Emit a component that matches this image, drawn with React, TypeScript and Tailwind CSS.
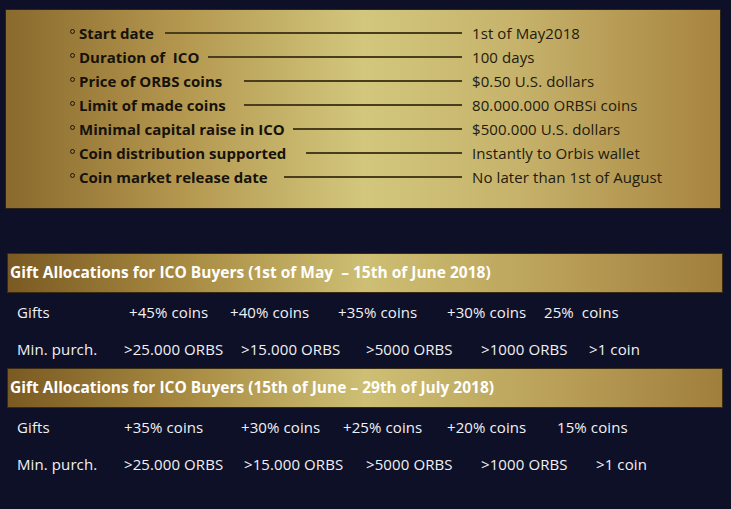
import React from "react";

const facts: { label: string; w: number; value: string }[] = [
  { label: "Start date", w: 95, value: "1st of May2018" },
  { label: "Duration of\u00a0 ICO", w: 138, value: "100 days" },
  { label: "Price of ORBS coins", w: 174, value: "$0.50 U.S. dollars" },
  { label: "Limit of made coins", w: 174, value: "80.000.000 ORBSi coins" },
  { label: "Minimal capital raise in ICO", w: 223, value: "$500.000 U.S. dollars" },
  { label: "Coin distribution supported", w: 236, value: "Instantly to Orbis wallet" },
  { label: "Coin market release date", w: 214, value: "No later than 1st of August" },
];

type Cell = { text: string; w: number };
type Row = { label: string; labelW: number; cells: Cell[] };

const periods: { title: string; rows: Row[] }[] = [
  {
    title: "Gift Allocations for ICO Buyers (1st of May\u00a0 \u2013 15th of June 2018)",
    rows: [
      {
        label: "Gifts",
        labelW: 112,
        cells: [
          { text: "+45% coins", w: 101 },
          { text: "+40% coins", w: 108 },
          { text: "+35% coins", w: 109 },
          { text: "+30% coins", w: 97 },
          { text: "25%\u00a0 coins", w: 120 },
        ],
      },
      {
        label: "Min. purch.",
        labelW: 107,
        cells: [
          { text: ">25.000 ORBS", w: 117 },
          { text: ">15.000 ORBS", w: 125 },
          { text: ">5000 ORBS", w: 115 },
          { text: ">1000 ORBS", w: 108 },
          { text: ">1 coin", w: 100 },
        ],
      },
    ],
  },
  {
    title: "Gift Allocations for ICO Buyers (15th of June \u2013 29th of July 2018)",
    rows: [
      {
        label: "Gifts",
        labelW: 107,
        cells: [
          { text: "+35% coins", w: 117 },
          { text: "+30% coins", w: 102 },
          { text: "+25% coins", w: 104 },
          { text: "+20% coins", w: 110 },
          { text: "15% coins", w: 100 },
        ],
      },
      {
        label: "Min. purch.",
        labelW: 107,
        cells: [
          { text: ">25.000 ORBS", w: 120 },
          { text: ">15.000 ORBS", w: 122 },
          { text: ">5000 ORBS", w: 115 },
          { text: ">1000 ORBS", w: 115 },
          { text: ">1 coin", w: 100 },
        ],
      },
    ],
  },
];

function GiftTable({ title, rows }: { title: string; rows: Row[] }) {
  return (
    <div>
      <div className="ml-[7px] mr-[8px] h-[40px] flex items-center pl-[2px] border border-[#3a2c12] bg-[linear-gradient(90deg,#7a5a22_0%,#a88b42_25%,#cdbf74_50%,#bba25b_75%,#a07e3c_100%)]">
        <span className="text-white font-bold text-[15.5px]">{title}</span>
      </div>
      {rows.map((r, idx) => (
        <div
          key={r.label}
          className={`flex items-center pl-[17px] text-[#f1f1f4] text-[15px] tracking-[0.1px] ${idx === 0 ? "h-[38px]" : "h-[37px]"}`}
        >
          <span className="shrink-0" style={{ width: r.labelW }}>
            {r.label}
          </span>
          {r.cells.map((c, i) => (
            <span key={i} className="shrink-0 whitespace-pre" style={{ width: c.w }}>
              {c.text}
            </span>
          ))}
        </div>
      ))}
    </div>
  );
}

export default function App() {
  return (
    <div className="w-[731px] h-[509px] bg-[#0e1027] overflow-hidden font-['Open_Sans',sans-serif] pt-[9px]">
      <div className="ml-[5px] w-[716px] h-[200px] border border-[#2b2416] bg-[linear-gradient(90deg,#8a6a2d_0%,#b3964e_24%,#d2c77d_50%,#c6b26b_72%,#a7843f_100%)] pt-[11px] pl-[64px]">
        {facts.map((f) => (
          <div key={f.label} className="flex items-center h-[24px]">
            <div className="flex items-center shrink-0" style={{ width: f.w }}>
              <span className="w-[5px] h-[5px] rounded-full border border-[#1c170c] mb-[4px] mr-[4px] shrink-0" />
              <span className="font-bold text-[15px] text-[#16120a]">{f.label}</span>
            </div>
            <div className="flex-1 h-[1.5px] bg-[#4a3d1e]" />
            <span className="w-[258px] shrink-0 pl-[10px] text-[15px] tracking-[0.1px] text-[#221a0c]">{f.value}</span>
          </div>
        ))}
      </div>
      <div className="h-[44px]" />
      {periods.map((p) => (
        <GiftTable key={p.title} title={p.title} rows={p.rows} />
      ))}
    </div>
  );
}
